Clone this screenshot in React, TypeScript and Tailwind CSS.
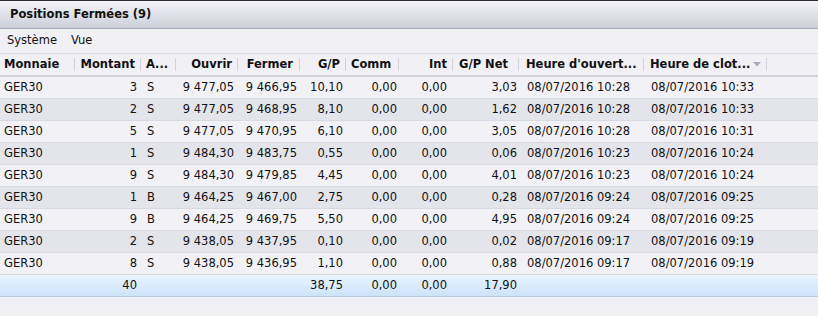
import React from "react";

const cols =
  "grid grid-cols-[75px_66px_35px_62px_62px_46px_53px_54px_66px_125px_123px_1fr]";

type Row = string[];

const rows: Row[] = [
  ["GER30", "3", "S", "9 477,05", "9 466,95", "10,10", "0,00", "0,00", "3,03", "08/07/2016 10:28", "08/07/2016 10:33"],
  ["GER30", "2", "S", "9 477,05", "9 468,95", "8,10", "0,00", "0,00", "1,62", "08/07/2016 10:28", "08/07/2016 10:33"],
  ["GER30", "5", "S", "9 477,05", "9 470,95", "6,10", "0,00", "0,00", "3,05", "08/07/2016 10:28", "08/07/2016 10:31"],
  ["GER30", "1", "S", "9 484,30", "9 483,75", "0,55", "0,00", "0,00", "0,06", "08/07/2016 10:23", "08/07/2016 10:24"],
  ["GER30", "9", "S", "9 484,30", "9 479,85", "4,45", "0,00", "0,00", "4,01", "08/07/2016 10:23", "08/07/2016 10:24"],
  ["GER30", "1", "B", "9 464,25", "9 467,00", "2,75", "0,00", "0,00", "0,28", "08/07/2016 09:24", "08/07/2016 09:25"],
  ["GER30", "9", "B", "9 464,25", "9 469,75", "5,50", "0,00", "0,00", "4,95", "08/07/2016 09:24", "08/07/2016 09:25"],
  ["GER30", "2", "S", "9 438,05", "9 437,95", "0,10", "0,00", "0,00", "0,02", "08/07/2016 09:17", "08/07/2016 09:19"],
  ["GER30", "8", "S", "9 438,05", "9 436,95", "1,10", "0,00", "0,00", "0,88", "08/07/2016 09:17", "08/07/2016 09:19"],
];

const cellCls = [
  "pl-[4px] justify-start",
  "pr-[4px] justify-end",
  "pl-[6px] justify-start",
  "pr-[4px] justify-end",
  "pr-[3px] justify-end",
  "pr-[3px] justify-end",
  "pr-[2px] justify-end",
  "pr-[6px] justify-end",
  "pr-[2px] justify-end",
  "pl-[8px] justify-start",
  "pl-[7px] justify-start",
];

const headers: { label: string; cls: string; arrow?: boolean }[] = [
  { label: "Monnaie", cls: "pl-[4px] justify-start" },
  { label: "Montant", cls: "pr-[5px] justify-end" },
  { label: "A...", cls: "pl-[5px] justify-start" },
  { label: "Ouvrir", cls: "pr-[5px] justify-end" },
  { label: "Fermer", cls: "pr-[6px] justify-end" },
  { label: "G/P", cls: "pr-[5px] justify-end" },
  { label: "Comm", cls: "pl-[5px] justify-start" },
  { label: "Int", cls: "pr-[5px] justify-end" },
  { label: "G/P Net", cls: "pl-[6px] justify-start" },
  { label: "Heure d'ouvert...", cls: "pl-[7px] justify-start" },
  { label: "Heure de clot...", cls: "pl-[6px] justify-start", arrow: true },
];

export default function App() {
  return (
    <div className="w-[818px] h-[316px] overflow-hidden bg-[#f1f0f5] font-['DejaVu_Sans',sans-serif] text-[11.5px] text-[#111]">
      {/* Title bar */}
      <div className="h-[29px] border-t border-t-[#2a2a36] border-b border-b-[#a8abbe] bg-gradient-to-b from-[#f3f3f7] to-[#cdcfda] flex items-center pl-[10px] font-bold text-[#111]">
        Positions Fermées (9)
      </div>
      {/* Menu bar */}
      <div className="h-[25px] border-b border-[#dcdce4] flex items-center gap-[14px] pl-[7px]">
        <span>Système</span>
        <span>Vue</span>
      </div>
      {/* Header */}
      <div className={`${cols} h-[23px] border-b-2 border-[#d3d3de] font-bold`}>
        {headers.map((h, i) => (
          <div key={i} className="flex items-center">
            <div className={`flex flex-1 items-center whitespace-nowrap ${h.cls}`}>
              <span>{h.label}</span>
              {h.arrow && (
                <>
                  <div className="flex-1" />
                  <svg width="8" height="5" viewBox="0 0 8 5" className="mr-[5px] shrink-0">
                    <path d="M0 0 L8 0 L4 4.5 Z" fill="#a8a9bd" />
                  </svg>
                </>
              )}
            </div>
            <div className="w-px h-[13px] bg-[#d2d2dd] shrink-0" />
          </div>
        ))}
        <div />
      </div>
      {/* Rows */}
      {rows.map((r, ri) => (
        <div
          key={ri}
          className={`${cols} h-[22px] border-b border-[#d9d9e2] ${
            ri % 2 === 1 ? "bg-[#e4e4eb]" : "bg-[#f2f1f6]"
          }`}
        >
          {r.map((v, ci) => (
            <div key={ci} className={`flex items-center whitespace-nowrap ${cellCls[ci]}`}>
              {v}
            </div>
          ))}
          <div />
        </div>
      ))}
      {/* Total */}
      <div className={`${cols} h-[22px] border-b border-[#b7cbe0] bg-gradient-to-b from-[#e9f4fe] to-[#cde3f9]`}>
        <div />
        <div className="flex items-center justify-end pr-[4px]">40</div>
        <div />
        <div />
        <div />
        <div className="flex items-center justify-end pr-[3px]">38,75</div>
        <div className="flex items-center justify-end pr-[2px]">0,00</div>
        <div className="flex items-center justify-end pr-[6px]">0,00</div>
        <div className="flex items-center justify-end pr-[2px]">17,90</div>
        <div />
        <div />
        <div />
      </div>
    </div>
  );
}
